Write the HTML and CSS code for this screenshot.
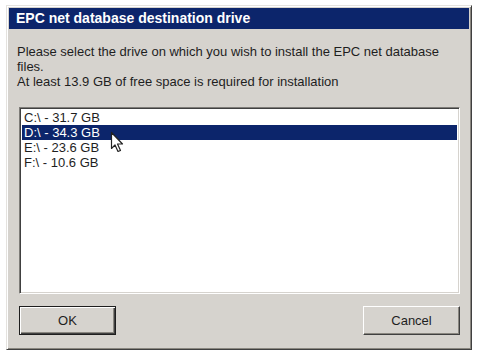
FILE: index.html
```html
<!DOCTYPE html>
<html>
<head>
<meta charset="utf-8">
<link rel="stylesheet" href="styles.css">
</head>
<body>
<div class="dialog">
  <div class="titlebar">EPC net database destination drive</div>
  <div class="message">
    <p>Please select the drive on which you wish to install the EPC net database files.</p>
    <p>At least 13.9 GB of free space is required for installation</p>
  </div>
  <div class="listbox">
    <div class="item">C:\ - 31.7 GB</div>
    <div class="item selected">D:\ - 34.3 GB</div>
    <div class="item">E:\ - 23.6 GB</div>
    <div class="item">F:\ - 10.6 GB</div>
    <svg class="cursor" width="14" height="22" viewBox="0 0 14 22">
      <path d="M1.5 1.5 L1.5 17.5 L5 14 L8 20.5 L10.5 19.5 L7.5 13 L12.5 13 Z" fill="#fff" stroke="#222" stroke-width="1.2" stroke-linejoin="round"/>
    </svg>
  </div>
  <div class="buttons">
    <button class="btn default">OK</button>
    <button class="btn">Cancel</button>
  </div>
</div>
</body>
</html>
```

FILE: styles.css
```css
html, body {
  margin: 0;
  padding: 0;
  background: #ffffff;
}
body {
  padding: 5px 0 0 6px;
  font-family: "Liberation Sans", Arial, sans-serif;
  font-size: 13px;
  color: #1e1e1e;
}
.dialog {
  box-sizing: border-box;
  width: 466px;
  height: 345px;
  background: #d6d3ce;
  border: 1px solid;
  border-color: #e4e2de #404040 #404040 #e4e2de;
  box-shadow: inset 1px 1px 0 #ffffff, inset -1px -1px 0 #8a8780;
  padding: 2px;
  display: flex;
  flex-direction: column;
}
.titlebar {
  height: 21px;
  background: #0c256b;
  color: #ffffff;
  font-weight: bold;
  font-size: 14px;
  line-height: 21px;
  padding-left: 7px;
}
.message {
  padding: 15px 0 0 8px;
  line-height: 15px;
}
.message p {
  margin: 0;
  width: 430px;
}
.listbox {
  position: relative;
  box-sizing: border-box;
  margin: 18px 9px 0 10px;
  height: 187px;
  background: #ffffff;
  border: 1px solid;
  border-color: #7e7c78 #ffffff #ffffff #7e7c78;
  box-shadow: inset 1px 1px 0 #404040, inset -1px -1px 0 #d6d3ce;
  padding: 2px 2px;
}
.item {
  height: 15px;
  line-height: 15px;
  padding-left: 2px;
  color: #1e1e1e;
}
.item.selected {
  background: #0c256b;
  color: #ffffff;
}
.cursor {
  position: absolute;
  left: 90px;
  top: 23px;
}
.buttons {
  display: flex;
  justify-content: space-between;
  margin: 12px 9px 0 10px;
}
.btn {
  box-sizing: border-box;
  width: 97px;
  height: 29px;
  background: #d6d3ce;
  font-family: "Liberation Sans", Arial, sans-serif;
  font-size: 13px;
  color: #1e1e1e;
  border: 1px solid;
  border-color: #ffffff #404040 #404040 #ffffff;
  box-shadow: inset -1px -1px 0 #8a8780;
  padding: 0;
}
.btn.default {
  border: 1px solid #1e1e1e;
  box-shadow: inset 1px 1px 0 #ffffff, inset -1px -1px 0 #404040, inset -2px -2px 0 #8a8780;
}
```
